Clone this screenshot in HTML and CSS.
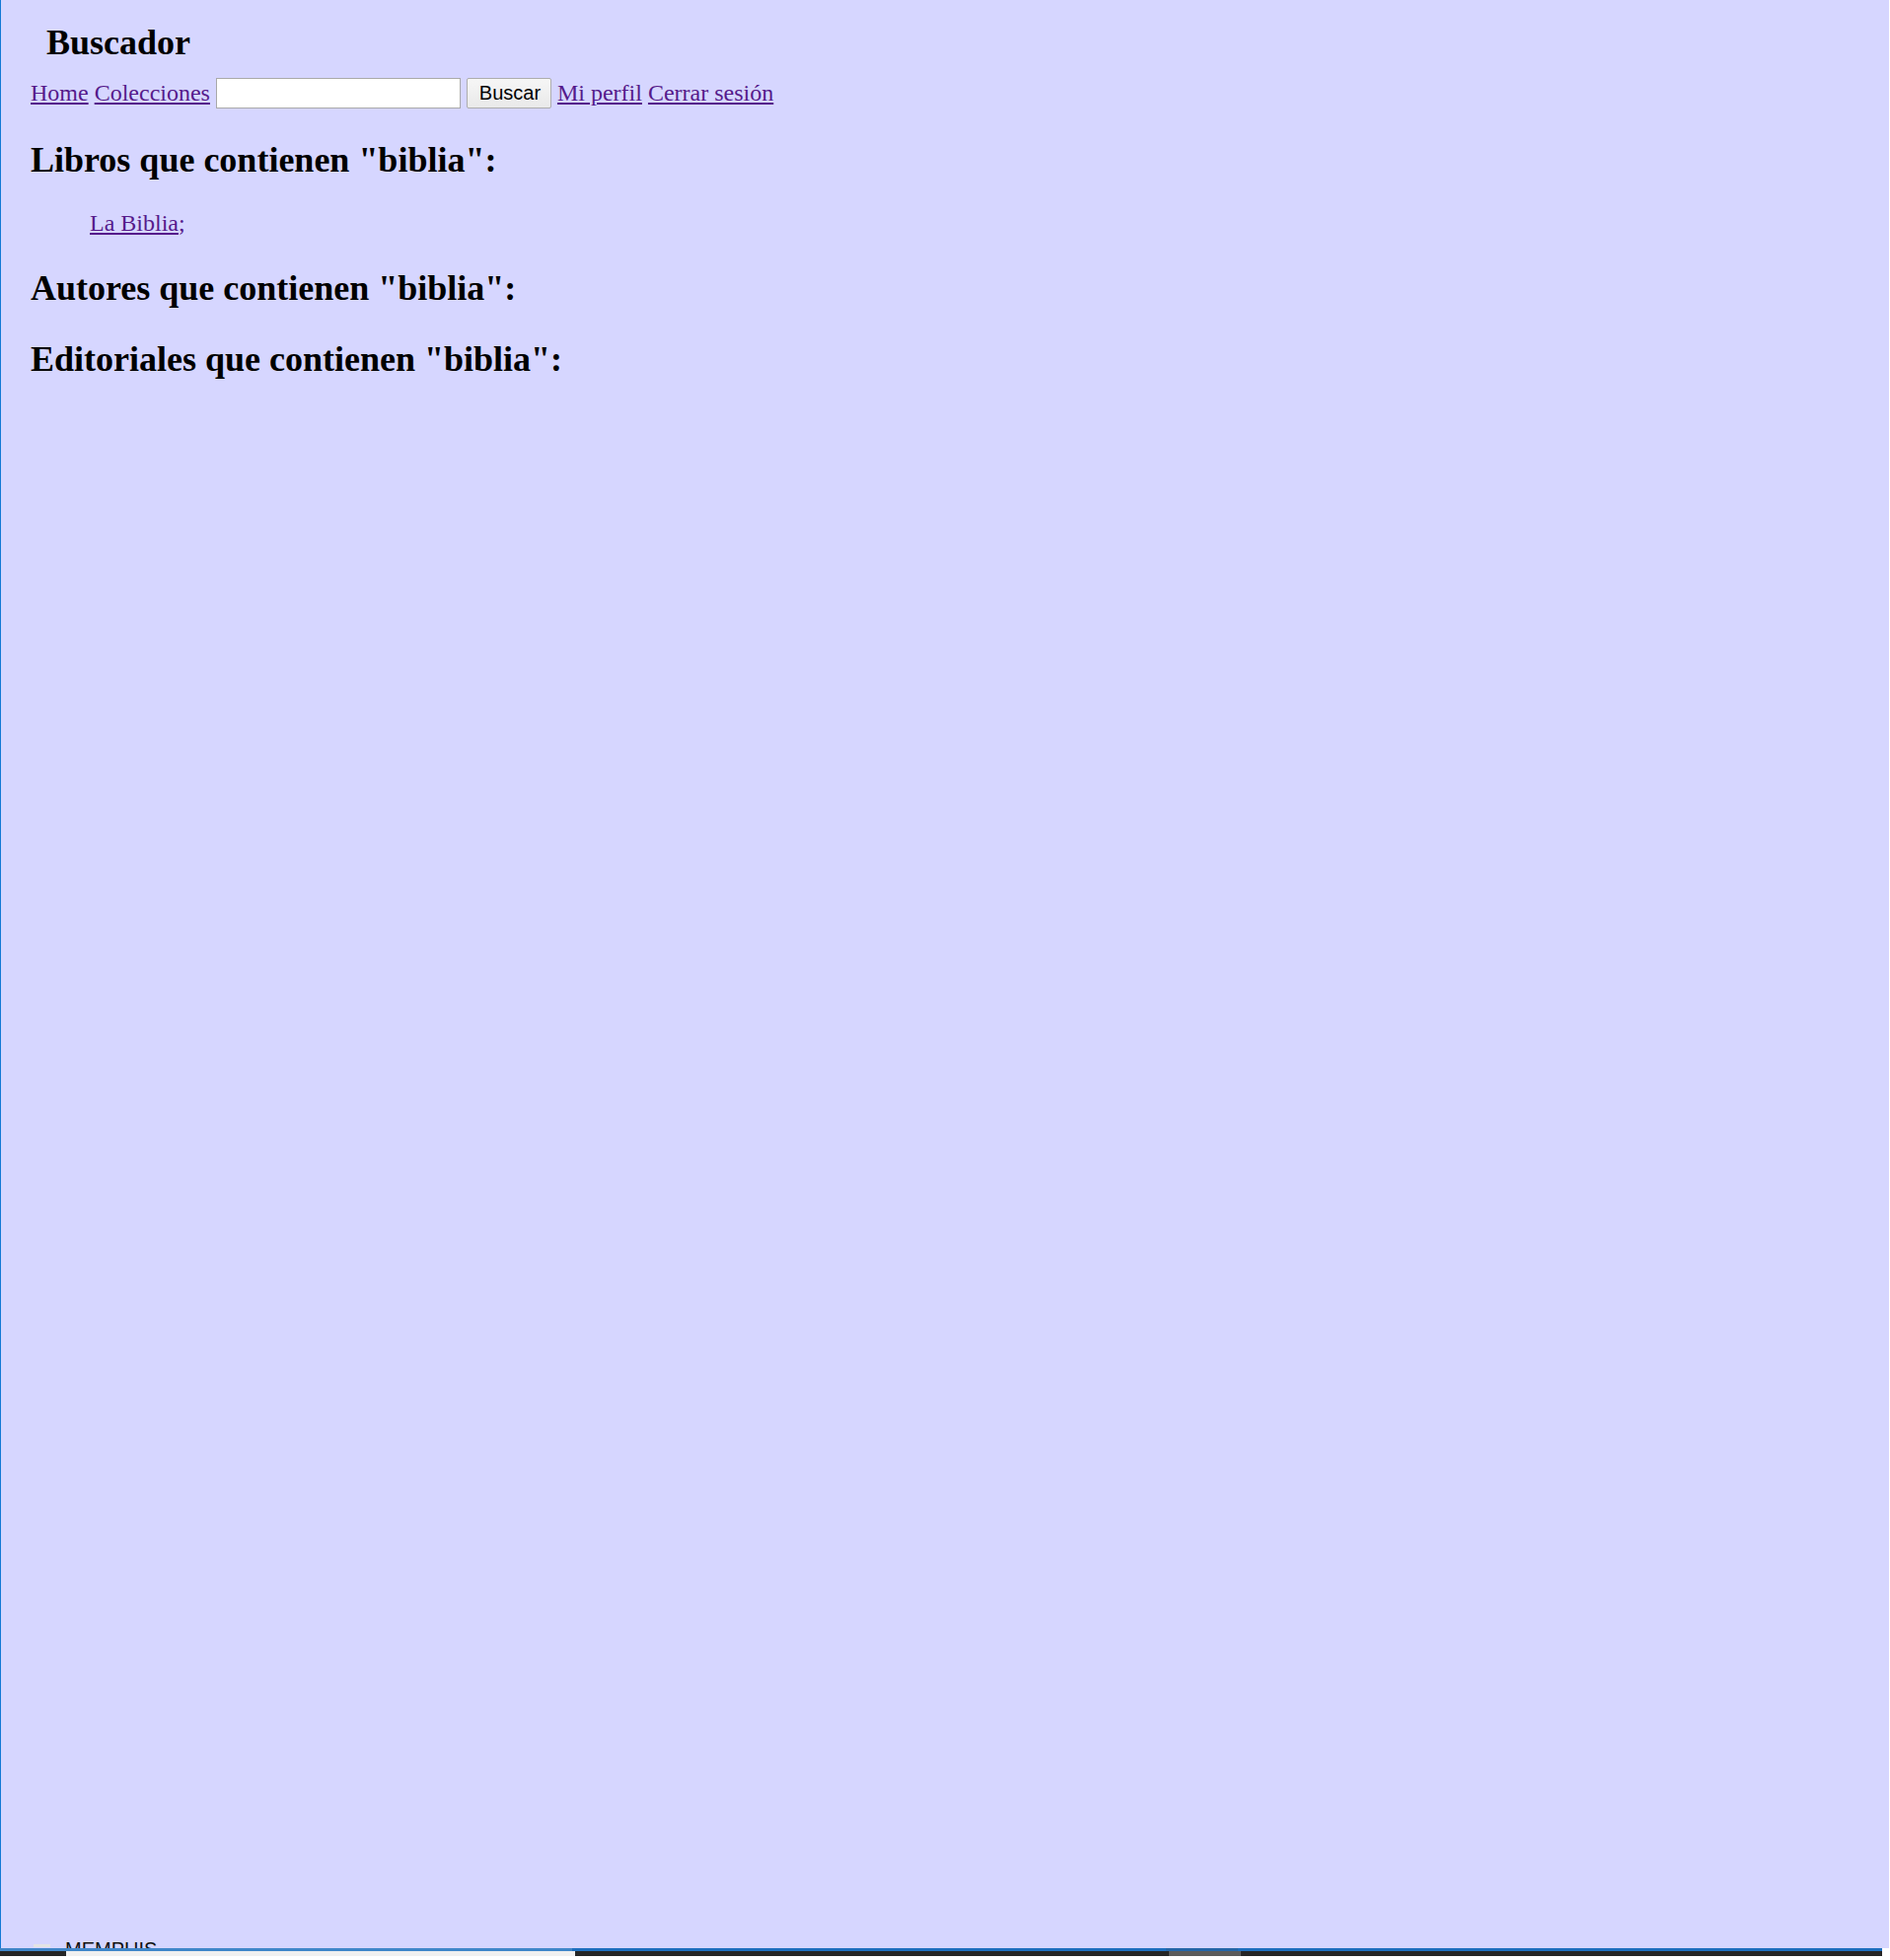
FILE: index.html
```html
<!DOCTYPE html>
<html lang="es">
<head>
<meta charset="utf-8">
<title>Buscador</title>
<link rel="stylesheet" href="styles.css">
</head>
<body>
<div class="window">
  <header class="top">
    <h1 class="title">Buscador</h1>
    <nav class="nav">
      <a href="#">Home</a>
      <a href="#">Colecciones</a>
      <form class="search">
        <input class="search-input" type="text">
        <button class="search-btn" type="button">Buscar</button>
      </form>
      <a href="#">Mi perfil</a>
      <a href="#">Cerrar sesión</a>
    </nav>
  </header>
  <main class="results">
    <h2 class="section-title section-title--first">Libros que contienen "biblia":</h2>
    <ul class="list">
      <li><a href="#">La Biblia</a><span class="sep">;</span></li>
    </ul>
    <h2 class="section-title">Autores que contienen "biblia":</h2>
    <h2 class="section-title">Editoriales que contienen "biblia":</h2>
  </main>
  <div class="ghost"><span class="ghost-box"></span><span class="ghost-text">MEMPHIS</span></div>
</div>
<div class="strip">
  <div class="strip-line"><span class="seg-a"></span><span class="seg-b"></span><span class="seg-c"></span><span class="seg-d"></span></div>
  <div class="strip-bar"><span class="bar-dark"></span><span class="bar-light"></span><span class="bar-dark2"></span><span class="bar-thumb"></span><span class="bar-dark3"></span></div>
</div>
</body>
</html>
```
FILE: styles.css
```css
html, body {
  margin: 0;
  padding: 0;
}
body {
  background: #ffffff;
  font-family: "Liberation Serif", "Times New Roman", serif;
  font-size: 24px;
  color: #000;
  width: 1916px;
  height: 1987px;
  overflow: hidden;
}
.window {
  position: relative;
  height: 1975px;
  background: #d6d6ff;
  border-left: 1px solid #1479d6;
  box-sizing: border-box;
  padding: 23px 0 0 30px;
  width: 1915px;
}
.title {
  margin: 0 0 16px 16px;
  font-size: 36px;
  line-height: 40px;
  font-weight: bold;
}
.nav {
  display: flex;
  align-items: center;
  gap: 6px;
  height: 31px;
  line-height: 28px;
}
.nav > a {
  position: relative;
  top: -1px;
}
a {
  color: #551a8b;
  text-decoration: underline;
}
.search {
  display: flex;
  gap: 6px;
  margin: 0;
}
.search-input {
  width: 248px;
  height: 31px;
  box-sizing: border-box;
  border: 1px solid #a9a9a9;
  background: #fff;
  margin: 0;
  padding: 0;
}
.search-btn {
  width: 86px;
  height: 31px;
  box-sizing: border-box;
  border: 1px solid #adadad;
  border-radius: 2px;
  background: linear-gradient(#f6f6f6, #e9e9e9);
  font-family: "Liberation Sans", Arial, sans-serif;
  font-size: 20px;
  color: #000;
  margin: 0;
  padding: 0 0 0 2px;
}
.results {
  padding-top: 32px;
}
.section-title {
  font-size: 36px;
  line-height: 40px;
  font-weight: bold;
  margin: 0 0 32px 0;
}
.section-title--first {
  margin-bottom: 31px;
}
.list {
  list-style: none;
  margin: 0 0 31px 0;
  padding: 0 0 0 60px;
  line-height: 28px;
  position: relative;
  top: -1px;
}
.sep {
  color: #551a8b;
}
.ghost {
  position: absolute;
  left: 0;
  top: 1966px;
  height: 9px;
  width: 400px;
  overflow: hidden;
}
.ghost-box {
  position: absolute;
  left: 33px;
  top: 5px;
  width: 17px;
  height: 3px;
  background: #e4e4e4;
}
.ghost-text {
  position: absolute;
  left: 65px;
  top: 0;
  font-family: "Liberation Sans", Arial, sans-serif;
  font-size: 20px;
  line-height: 20px;
  color: #111;
}
.strip {
  width: 1916px;
  height: 12px;
}
.strip-line {
  display: flex;
  height: 3px;
}
.seg-a {
  width: 580px;
  background: #3f86c9;
}
.seg-b {
  width: 602px;
  background: #1e6fbf;
}
.seg-c {
  width: 73px;
  background: #2566a8;
}
.seg-d {
  width: 653px;
  background: #1e6fbf;
}
.strip-bar {
  display: flex;
  height: 5px;
}
.bar-dark {
  width: 67px;
  background: #252525;
}
.bar-light {
  width: 516px;
  background: #f0f0f0;
}
.bar-dark2 {
  width: 602px;
  background: #252525;
}
.bar-thumb {
  width: 73px;
  background: #5b5b5b;
}
.bar-dark3 {
  width: 650px;
  background: #252525;
}
```
